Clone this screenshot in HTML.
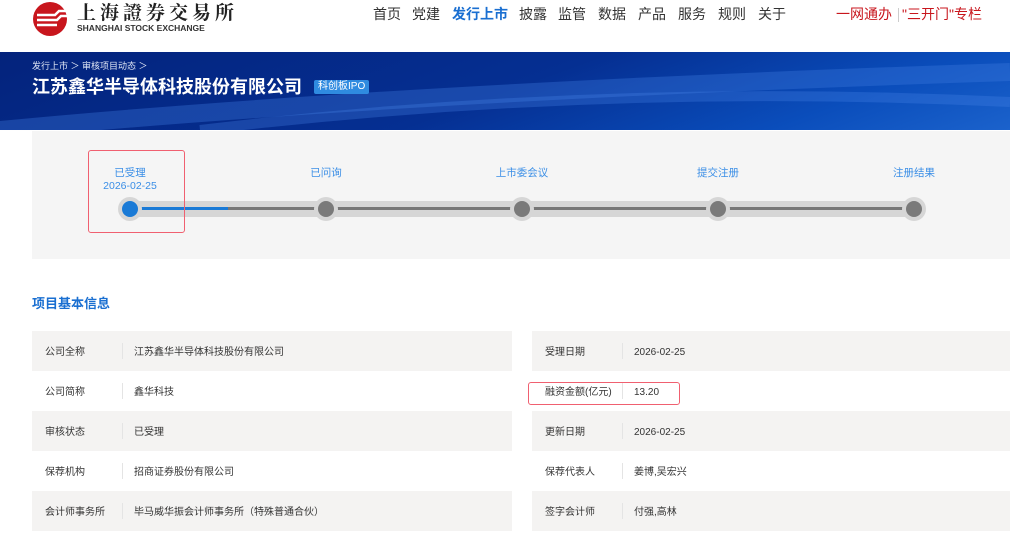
<!DOCTYPE html>
<html><head><meta charset="utf-8"><style>
*{margin:0;padding:0;box-sizing:border-box}
body{width:1012px;height:534px;overflow:hidden;background:#fff;font-family:"Liberation Sans","Noto Sans CJK SC",sans-serif;position:relative}
.a{position:absolute;white-space:nowrap;line-height:1.2}
.nav{top:6px;font-size:14px;color:#333}
.row{position:absolute;height:40px;font-size:10px;color:#333}
.row.g{background:#f4f3f2}
.row span{position:absolute;top:2px;line-height:40px;white-space:nowrap}
.row i{position:absolute;left:90px;top:12px;width:1px;height:16px;background:#e4e4e4}
.lbl{font-size:10.5px;color:#3a8ee6;text-align:center;line-height:13px}
.dot{position:absolute;width:24px;height:24px;border-radius:50%;background:#d6d6d6;top:197px}
.dot b{position:absolute;left:4px;top:4px;width:16px;height:16px;border-radius:50%;background:#7a7a7a}
</style></head><body>
<svg class="a" style="left:32px;top:1px" width="40" height="36" viewBox="0 0 40 36"><circle cx="18" cy="18" r="17" fill="#c8161d"/><path d="M5 14h18l4-4h10M5 19h20l4-4h8M5 24h20" stroke="#fff" stroke-width="2.5" fill="none"/></svg>
<div class="a" style="left:77px;top:1px;font-size:19px;line-height:22px;font-family:'Noto Serif CJK SC',serif;color:#222;letter-spacing:4px;font-weight:bold">上海證券交易所</div>
<div class="a" style="left:77px;top:24px;font-size:8.5px;line-height:9px;font-weight:bold;color:#333">SHANGHAI STOCK EXCHANGE</div>
<div class="a nav" style="left:373px">首页</div>
<div class="a nav" style="left:412px">党建</div>
<div class="a nav" style="left:452px;color:#1a6fd1;font-weight:bold">发行上市</div>
<div class="a nav" style="left:519px">披露</div>
<div class="a nav" style="left:558px">监管</div>
<div class="a nav" style="left:598px">数据</div>
<div class="a nav" style="left:638px">产品</div>
<div class="a nav" style="left:678px">服务</div>
<div class="a nav" style="left:718px">规则</div>
<div class="a nav" style="left:758px">关于</div>
<div class="a nav" style="left:836px;color:#c8161d">一网通办</div>
<div class="a" style="left:898px;top:8px;width:1px;height:14px;background:#ccc"></div>
<div class="a nav" style="left:902px;color:#c8161d">"三开门"专栏</div>
<div class="a" style="left:0;top:52px;width:1010px;height:78px;background:linear-gradient(160deg,#04237c 0%,#052f92 50%,#0a4dbb 80%,#1b62cc 100%);overflow:hidden">
<svg width="1010" height="78" style="position:absolute;left:0;top:0"><path d="M0 78 Q400 40 1010 20" stroke="#3f7ae0" stroke-width="18" fill="none" opacity=".35"/><path d="M200 78 Q600 30 1010 50" stroke="#4a86e8" stroke-width="10" fill="none" opacity=".3"/></svg>
</div>
<div class="a" style="left:32px;top:61px;font-size:9px;color:#dfe6f5">发行上市 ＞ 审核项目动态 ＞</div>
<div class="a" style="left:32px;top:77px;font-size:18px;color:#fff;font-weight:bold">江苏鑫华半导体科技股份有限公司</div>
<div class="a" style="left:314px;top:80px;padding:1px 4px;font-size:10px;color:#fff;background:#2f8be0;border-radius:2px">科创板IPO</div>
<div class="a" style="left:32px;top:131px;width:978px;height:128px;background:#f5f5f5"></div>
<div class="a" style="left:130px;top:201px;width:784px;height:16px;background:#d6d6d6"></div>
<div class="a" style="left:130px;top:207px;width:784px;height:3px;background:#777"></div>
<div class="a" style="left:130px;top:207px;width:98px;height:3px;background:#1a7ad6"></div>
<div class="dot" style="left:118px"><b style="background:#1a7ad6"></b></div>
<div class="dot" style="left:314px"><b></b></div>
<div class="dot" style="left:510px"><b></b></div>
<div class="dot" style="left:706px"><b></b></div>
<div class="dot" style="left:902px"><b></b></div>
<div class="a lbl" style="left:90px;top:167px;width:80px">已受理<br>2026-02-25</div>
<div class="a lbl" style="left:286px;top:167px;width:80px">已问询</div>
<div class="a lbl" style="left:482px;top:167px;width:80px">上市委会议</div>
<div class="a lbl" style="left:678px;top:167px;width:80px">提交注册</div>
<div class="a lbl" style="left:874px;top:167px;width:80px">注册结果</div>
<div class="a" style="left:88px;top:150px;width:97px;height:83px;border:1.5px solid #f06070;border-radius:3px"></div>
<div class="a" style="left:32px;top:296px;font-size:13px;color:#1a6fd1;font-weight:bold">项目基本信息</div>
<div class="row g" style="left:32px;top:331px;width:480px"><span style="left:13px">公司全称</span><i></i><span style="left:102px">江苏鑫华半导体科技股份有限公司</span></div>
<div class="row" style="left:32px;top:371px;width:480px"><span style="left:13px">公司简称</span><i></i><span style="left:102px">鑫华科技</span></div>
<div class="row g" style="left:32px;top:411px;width:480px"><span style="left:13px">审核状态</span><i></i><span style="left:102px">已受理</span></div>
<div class="row" style="left:32px;top:451px;width:480px"><span style="left:13px">保荐机构</span><i></i><span style="left:102px">招商证券股份有限公司</span></div>
<div class="row g" style="left:32px;top:491px;width:480px"><span style="left:13px">会计师事务所</span><i></i><span style="left:102px">毕马威华振会计师事务所（特殊普通合伙）</span></div>
<div class="row g" style="left:532px;top:331px;width:478px"><span style="left:13px">受理日期</span><i></i><span style="left:102px">2026-02-25</span></div>
<div class="row" style="left:532px;top:371px;width:478px"><span style="left:13px">融资金额(亿元)</span><i></i><span style="left:102px">13.20</span></div>
<div class="row g" style="left:532px;top:411px;width:478px"><span style="left:13px">更新日期</span><i></i><span style="left:102px">2026-02-25</span></div>
<div class="row" style="left:532px;top:451px;width:478px"><span style="left:13px">保荐代表人</span><i></i><span style="left:102px">姜博,吴宏兴</span></div>
<div class="row g" style="left:532px;top:491px;width:478px"><span style="left:13px">签字会计师</span><i></i><span style="left:102px">付强,高林</span></div>
<div class="a" style="left:528px;top:382px;width:152px;height:23px;border:1.5px solid #f06070;border-radius:3px"></div>
</body></html>
